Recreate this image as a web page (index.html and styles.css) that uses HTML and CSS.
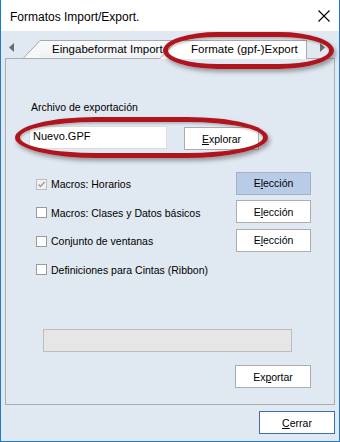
FILE: index.html
```html
<!DOCTYPE html>
<html>
<head>
<meta charset="utf-8">
<link rel="stylesheet" href="styles.css">
</head>
<body>
<div class="window">
  <div class="titlebar">
    <span class="title">Formatos Import/Export.</span>
    <svg class="close" width="12" height="12" viewBox="0 0 12 12"><path d="M0.5 0.5 L11.5 11.5 M11.5 0.5 L0.5 11.5" stroke="#000" stroke-width="1.1" fill="none"/></svg>
  </div>
  <div class="client">
    <div class="tabstrip">
      <svg class="arrow arrow-left" width="5" height="9" viewBox="0 0 5 9"><polygon points="5,0 5,9 0,4.5" fill="#6b6b6b"/></svg>
      <div class="tab tab-inactive">
        <svg class="tab-slant" width="17" height="18" viewBox="0 0 17 18"><polygon points="0,18 17,0.5 17,18" fill="#f6f7f8"/><path d="M0.5 18 L17 0.5" stroke="#a9a9a9" stroke-width="1" fill="none"/></svg>
        <div class="tab-body">Eingabeformat Import</div>
      </div>
      <div class="tab tab-active">
        <svg class="tab-slant" width="18" height="19" viewBox="0 0 18 19"><polygon points="0,19 18,0.5 18,19" fill="#fff"/><path d="M0.5 19 L18 0.5" stroke="#a9a9a9" stroke-width="1" fill="none"/></svg>
        <div class="tab-body">Formate (gpf-)Export</div>
      </div>
      <svg class="arrow arrow-right" width="5" height="9" viewBox="0 0 5 9"><polygon points="0,0 0,9 5,4.5" fill="#6b6b6b"/></svg>
    </div>
    <div class="panel">
      <div class="field-label">Archivo de exportación</div>
      <div class="file-row">
        <div class="text-input">Nuevo.GPF</div>
        <div class="btn btn-explore"><u>E</u>xplorar</div>
      </div>
      <div class="options">
        <div class="opt-row">
          <div class="check"><span class="box box-checked"><svg width="9" height="9" viewBox="0 0 9 9"><path d="M1.5 4.5 L3.5 6.5 L7.5 2" stroke="#9a9a9a" stroke-width="1.3" fill="none"/></svg></span>Macros: Horarios</div>
          <div class="btn btn-hot">E<u>l</u>ección</div>
        </div>
        <div class="opt-row">
          <div class="check"><span class="box"></span>Macros: Clases y Datos básicos</div>
          <div class="btn">E<u>l</u>ección</div>
        </div>
        <div class="opt-row">
          <div class="check"><span class="box"></span>Conjunto de ventanas</div>
          <div class="btn">E<u>l</u>ección</div>
        </div>
        <div class="opt-row">
          <div class="check"><span class="box"></span>Definiciones para Cintas (Ribbon)</div>
        </div>
      </div>
      <div class="progress"></div>
      <div class="export-row">
        <div class="btn">Ex<u>p</u>ortar</div>
      </div>
    </div>
    <div class="footer">
      <div class="btn btn-default"><u>C</u>errar</div>
    </div>
  </div>
  <div class="ring ring-tab"></div>
  <div class="ring ring-file"></div>
</div>
</body>
</html>
```
FILE: styles.css
```css
* { box-sizing: border-box; }
body { margin: 0; font-family: "Liberation Sans", Arial, sans-serif; color: #000; }

.window {
  position: relative;
  width: 340px;
  height: 442px;
  border: 1px solid #1a7bd0;
  border-top: none;
  background: #e0e8f1;
  display: flex;
  flex-direction: column;
  overflow: hidden;
}

.titlebar {
  height: 31px;
  flex: none;
  background: #fff;
  display: flex;
  align-items: center;
  justify-content: space-between;
  padding: 0 9px;
  font-size: 12px;
}
.title { margin-top: 2px; }
.close { display: block; }

.client { flex: 1; display: flex; flex-direction: column; }

.tabstrip {
  height: 27px;
  flex: none;
  display: flex;
  align-items: flex-end;
}
.arrow { display: block; margin-bottom: 6px; flex: none; }
.arrow-left { margin-left: 8px; }
.arrow-right { margin-left: 13px; }

.tab { display: flex; align-items: flex-end; flex: none; font-size: 11.5px; }
.tab-slant { display: block; flex: none; }
.tab-body {
  border-top: 1px solid #a9a9a9;
  border-right: 1px solid #a9a9a9;
  line-height: 17px;
  white-space: nowrap;
}
.tab-inactive { margin-left: 9px; }
.tab-inactive .tab-body {
  width: 140px;
  height: 18px;
  padding-left: 12px;
  background: linear-gradient(#f9fafb, #eff1f3);
  overflow: hidden;
}
.tab-active {
  margin-left: -21px;
  margin-bottom: -1px;
  position: relative;
  z-index: 2;
}
.tab-active .tab-body {
  width: 130px;
  height: 19px;
  padding-left: 14px;
  background: #fff;
}

.panel {
  margin: 0 4px;
  height: 347px;
  flex: none;
  border: 1px solid #acacac;
  padding: 42px 23px 0;
  font-size: 10.5px;
}
.field-label { line-height: 13px; padding-left: 2px; }

.file-row { display: flex; align-items: flex-start; margin-top: 12px; }
.text-input {
  width: 138px;
  height: 23px;
  background: #fff;
  border: 1px solid #dadde2;
  padding-left: 3px;
  line-height: 19px;
  font-size: 11px;
}
.btn {
  width: 75px;
  height: 23px;
  border: 1px solid #adadad;
  background: #fff;
  display: flex;
  align-items: center;
  justify-content: center;
  font-size: 10.5px;
  flex: none;
}
.btn-explore { margin-left: 17px; margin-top: 1px; }
.btn-hot { background: #b8cce8; border-color: #a1b0c4; }

.options { margin-top: 19px; }
.opt-row {
  height: 28.5px;
  display: flex;
  align-items: center;
  justify-content: space-between;
}
.check { display: flex; align-items: center; margin-left: 7px; margin-top: 2px; }
.box {
  width: 11px;
  height: 11px;
  border: 1px solid #9a9a9a;
  background: #fff;
  margin-right: 4px;
  display: flex;
  align-items: center;
  justify-content: center;
}
.box-checked { border-color: #bdbdbd; background: #f0f0f0; }
.box svg { display: block; }

.progress {
  margin: 46px 0 0 14px;
  width: 249px;
  height: 23px;
  background: #e6e6e6;
  border: 1px solid #bcbcbc;
}
.export-row { display: flex; justify-content: flex-end; margin-top: 13px; }
.export-row .btn { width: 76px; }

.footer { display: flex; justify-content: flex-end; padding: 6px 4px 0 0; }
.btn-default { width: 76px; border-color: #3d6eb0; }

.ring {
  position: absolute;
  border: 5px solid #b0141c;
  border-radius: 32% / 50%;
  box-shadow: 2px 3px 4px rgba(60, 60, 60, 0.45), inset 1px 2px 2px rgba(60, 60, 60, 0.25);
  z-index: 5;
}
.ring-tab { left: 162px; top: 32px; width: 171px; height: 37px; }
.ring-file { left: 14px; top: 117px; width: 253px; height: 41px; }
```
